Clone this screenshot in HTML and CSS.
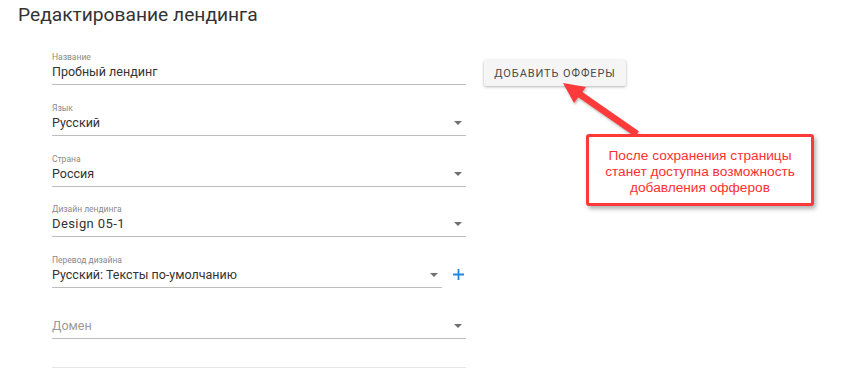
FILE: index.html
```html
<!DOCTYPE html>
<html lang="ru">
<head>
    <meta charset="UTF-8">
    <meta name="viewport" content="width=device-width, initial-scale=1.0">
    <title>Редактирование лендинга</title>
    <link rel="stylesheet" href="styles.css">
</head>
<body>
    <div class="page">
        <h1 class="title">Редактирование лендинга</h1>

        <div class="content">
            <div class="form">
                <div class="field">
                    <div class="label">Название</div>
                    <div class="input">Пробный лендинг</div>
                </div>
                <div class="field">
                    <div class="label">Язык</div>
                    <div class="input select">Русский<span class="arrow"></span></div>
                </div>
                <div class="field">
                    <div class="label">Страна</div>
                    <div class="input select">Россия<span class="arrow"></span></div>
                </div>
                <div class="field">
                    <div class="label">Дизайн лендинга</div>
                    <div class="input select"><span class="latin">Design 05-1</span><span class="arrow"></span></div>
                </div>
                <div class="field-row">
                    <div class="field grow">
                        <div class="label">Перевод дизайна</div>
                        <div class="input select">Русский: Тексты по-умолчанию<span class="arrow"></span></div>
                    </div>
                    <svg class="plus" width="11" height="11" viewBox="0 0 11 11">
                        <path d="M5.5 0v11M0 5.5h11" stroke="#1e88e5" stroke-width="1.8" fill="none"/>
                    </svg>
                </div>
                <div class="field">
                    <div class="label"></div>
                    <div class="input select placeholder">Домен<span class="arrow"></span></div>
                </div>
                <div class="divider"></div>
            </div>

            <div class="side">
                <button class="btn">ДОБАВИТЬ ОФФЕРЫ</button>
            </div>
        </div>
    </div>

    <!-- подсказка поверх страницы -->
    <svg class="pointer" width="864" height="382" viewBox="0 0 864 382">
        <line x1="637" y1="134" x2="578" y2="93" stroke="#ff3a3a" stroke-width="6.5"/>
        <polygon points="563,83 586,87 574,103" fill="#ff3a3a"/>
    </svg>
    <div class="callout">После сохранения страницы<br>станет доступна возможность<br>добавления офферов</div>
</body>
</html>
```

FILE: styles.css
```css
body {
    margin: 0;
    font-family: Roboto, "Noto Sans", sans-serif;
    color: #333;
    background: #fff;
}

.page {
    padding: 3px 0 0 18px;
}

.title {
    margin: 0;
    font-size: 19.2px;
    font-weight: 400;
    line-height: 24px;
    color: #333;
}

.content {
    display: flex;
    gap: 18px;
    padding: 25px 0 0 34px;
}

.form {
    width: 414px;
    display: flex;
    flex-direction: column;
    gap: 17.8px;
}

.field {
    border-bottom: 1px solid #bdbdbd;
}

.field-row {
    display: flex;
    align-items: center;
    gap: 11px;
}

.field-row .grow {
    flex: 1;
}

.plus {
    margin-top: 6px;
    margin-right: 2px;
}

.label {
    height: 11px;
    font-size: 8.5px;
    line-height: 11px;
    color: #8a8a8a;
}

.input {
    font-size: 12.5px;
    line-height: 18px;
    padding-bottom: 3px;
    color: #333;
}

.latin {
    font-size: 13px;
    letter-spacing: 0.4px;
}

.select {
    display: flex;
    justify-content: space-between;
    align-items: center;
}

.placeholder {
    color: #9a9a9a;
}

.arrow {
    width: 0;
    height: 0;
    margin-right: 4px;
    border-left: 4px solid transparent;
    border-right: 4px solid transparent;
    border-top: 4px solid #6f6f6f;
}

.divider {
    margin-top: 10px;
    border-top: 1px solid #e6e6e6;
}

.side {
    padding-top: 8px;
}

.btn {
    width: 142px;
    height: 26px;
    border: none;
    border-radius: 2px;
    background: #f5f5f5;
    box-shadow: 0 1px 3px rgba(0, 0, 0, 0.3);
    font-family: Roboto, sans-serif;
    font-size: 11px;
    letter-spacing: 0.9px;
    color: #4a4a4a;
    padding: 0;
}

.pointer {
    position: absolute;
    left: 0;
    top: 0;
    pointer-events: none;
    filter: drop-shadow(1px 2px 1px rgba(0, 0, 0, 0.25));
}

.callout {
    position: absolute;
    left: 586px;
    top: 134px;
    width: 228px;
    height: 72px;
    box-sizing: border-box;
    border: 3px solid #ff3838;
    border-radius: 3px;
    background: #fff;
    box-shadow: 2px 3px 4px rgba(0, 0, 0, 0.3);
    font-family: "Liberation Sans", Arial, sans-serif;
    font-size: 13.7px;
    line-height: 16px;
    color: #ff3030;
    text-align: center;
    padding-top: 11px;
}
```
